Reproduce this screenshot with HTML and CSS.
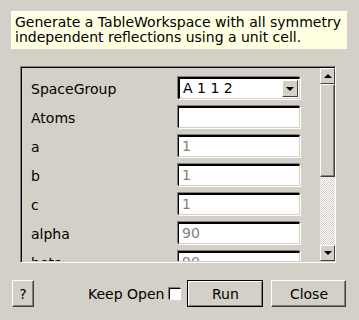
FILE: index.html
```html
<!DOCTYPE html>
<html lang="en">

<head>
    <meta charset="UTF-8">
    <title>Algorithm Dialog</title>
    <link rel="stylesheet" href="styles.css">
</head>

<body>
    <div class="desc">Generate a TableWorkspace with all symmetry independent reflections using a unit cell.</div>

    <div class="frame">
        <div class="form">
            <div class="row">
                <span class="label">SpaceGroup</span>
                <div class="combo">
                    <span class="combo-text">A 1 1 2</span>
                    <span class="combo-btn"><span class="arrow-down"></span></span>
                </div>
            </div>
            <div class="row">
                <span class="label">Atoms</span>
                <div class="field"></div>
            </div>
            <div class="row">
                <span class="label">a</span>
                <div class="field hint">1</div>
            </div>
            <div class="row">
                <span class="label">b</span>
                <div class="field hint">1</div>
            </div>
            <div class="row">
                <span class="label">c</span>
                <div class="field hint">1</div>
            </div>
            <div class="row">
                <span class="label">alpha</span>
                <div class="field hint">90</div>
            </div>
            <div class="row">
                <span class="label">beta</span>
                <div class="field hint">90</div>
            </div>
        </div>
        <div class="scrollbar">
            <div class="sb-btn"><span class="arrow-up"></span></div>
            <div class="sb-thumb"></div>
            <div class="sb-track"></div>
            <div class="sb-btn"><span class="arrow-down"></span></div>
        </div>
    </div>

    <div class="buttons">
        <div class="btn help">?</div>
        <div class="keep">Keep Open <span class="check"></span></div>
        <div class="btn run">Run</div>
        <div class="btn close">Close</div>
    </div>
</body>

</html>
```

FILE: styles.css
```css
body {
    margin: 0;
    width: 359px;
    height: 320px;
    overflow: hidden;
    background-color: #d4d0c8;
    font-family: "DejaVu Sans", sans-serif;
    font-size: 14px;
    color: #000;
}

.desc {
    margin: 11px 11px 0 11px;
    height: 34px;
    padding: 3px 3px 0 3px;
    background-color: #ffffe1;
    border: 1px solid #fff;
    border-right-color: #d4d0c8;
    border-bottom-color: #d4d0c8;
    line-height: 15px;
}

.frame {
    margin: 16px 0 0 20px;
    width: 316px;
    height: 197px;
    box-sizing: border-box;
    border: 1px solid #808080;
    border-right-color: #fff;
    border-bottom-color: #fff;
    box-shadow: inset 1px 1px 0 #000;
    display: flex;
    padding: 1px 0 1px 1px;
}

.form {
    flex: 1;
    overflow: hidden;
    padding: 9px 0 0 9px;
    display: flex;
    flex-direction: column;
    gap: 7px;
}

.row {
    display: flex;
    align-items: center;
    height: 22px;
    flex-shrink: 0;
}

.label {
    width: 147px;
    padding-top: 1px;
}

.field, .combo {
    width: 122px;
    height: 22px;
    box-sizing: border-box;
    background-color: #fff;
    border: 2px solid #000;
    border-right: 1px solid #d4d0c8;
    border-bottom: 1px solid #d4d0c8;
    box-shadow: 1px 1px 0 #fff, -1px -1px 0 #808080;
    padding: 0 3px;
    line-height: 19px;
}

.field {
    border-left-width: 1px;
}

.hint {
    color: #808080;
}

.combo {
    display: flex;
    align-items: center;
    padding-right: 1px;
}

.combo-text {
    flex: 1;
}

.combo-btn {
    width: 16px;
    height: 17px;
    box-sizing: border-box;
    background-color: #d4d0c8;
    border: 1px solid #fff;
    border-right-color: #404040;
    border-bottom-color: #404040;
    display: flex;
    align-items: center;
    justify-content: center;
}

.arrow-down {
    width: 0;
    height: 0;
    border-left: 4px solid transparent;
    border-right: 4px solid transparent;
    border-top: 4px solid #000;
}

.arrow-up {
    width: 0;
    height: 0;
    border-left: 4px solid transparent;
    border-right: 4px solid transparent;
    border-bottom: 4px solid #000;
}

.scrollbar {
    width: 15px;
    display: flex;
    flex-direction: column;
}

.sb-btn {
    height: 16px;
    flex-shrink: 0;
    box-sizing: border-box;
    background-color: #d4d0c8;
    border: 1px solid #fff;
    border-right-color: #404040;
    border-bottom-color: #404040;
    display: flex;
    align-items: center;
    justify-content: center;
}

.sb-thumb {
    height: 93px;
    flex-shrink: 0;
    box-sizing: border-box;
    background-color: #d4d0c8;
    border: 1px solid #fff;
    border-right-color: #404040;
    border-bottom-color: #404040;
    box-shadow: inset -1px -1px 0 #808080;
}

.sb-track {
    flex: 1;
    background-image: repeating-conic-gradient(#d4d0c8 0 25%, #fff 0 50%);
    background-size: 2px 2px;
}

.buttons {
    display: flex;
    align-items: center;
    margin: 17px 0 0 12px;
}

.btn {
    height: 27px;
    box-sizing: border-box;
    border: 1px solid #fff;
    border-right-color: #404040;
    border-bottom-color: #404040;
    box-shadow: inset -1px -1px 0 #808080;
    display: flex;
    align-items: center;
    justify-content: center;
}

.help {
    width: 22px;
}

.keep {
    margin-left: 54px;
    display: flex;
    align-items: center;
    gap: 5px;
}

.check {
    width: 12px;
    height: 12px;
    box-sizing: border-box;
    background-color: #fff;
    border: 1px solid #000;
    border-right-color: #fff;
    border-bottom-color: #fff;
    box-shadow: -1px -1px 0 #808080;
}

.run {
    width: 76px;
    margin-left: 6px;
    border: 1px solid #000;
    box-shadow: inset 1px 1px 0 #fff, inset -1px -1px 0 #808080;
}

.close {
    width: 75px;
    margin-left: 8px;
}
```
